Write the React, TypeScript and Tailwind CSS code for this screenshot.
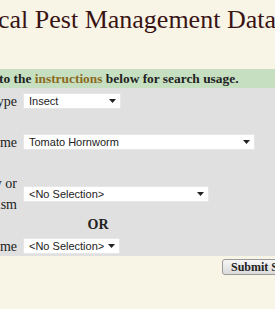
import React from 'react';

// Search form for the pest management database (viewport shows a cropped window)

const SERIF = "font-['Liberation_Serif','Times_New_Roman',serif]";
const SANS = "font-['Liberation_Sans',Arial,sans-serif]";

function Caret() {
  return (
    <svg width="7" height="4" viewBox="0 0 7 4" className="shrink-0">
      <polygon points="0,0 7,0 3.5,4" fill="#222" />
    </svg>
  );
}

function FakeSelect({ value, width }: { value: string; width: string }) {
  return (
    <div
      className={`flex h-[16px] items-center justify-between whitespace-nowrap bg-white border border-[#e6e6e6] pl-[5px] pr-[4px] text-[11px] leading-none text-[#222] ${SANS} ${width}`}
    >
      <span>{value}</span>
      <Caret />
    </div>
  );
}

function Label({ children }: { children: React.ReactNode }) {
  return <div className="flex justify-end overflow-hidden whitespace-nowrap">{children}</div>;
}

export default function App() {
  return (
    <div className="w-[275px] h-[315px] overflow-hidden bg-white">
      <div className="bg-[#f8f5e7] h-[309px] flex flex-col">
        {/* Title */}
        <div className="h-[69px] shrink-0 overflow-hidden">
          <h1
            className={`${SERIF} whitespace-nowrap text-[26px] leading-none text-[#3a1414] pt-[7px] -ml-[80px]`}
          >
            Biological Pest Management Database
          </h1>
        </div>

        {/* Notice bar */}
        <div
          className={`h-[19px] shrink-0 bg-[#c6dfc1] ${SERIF} text-[13.4px] font-bold text-[#222] whitespace-nowrap leading-[19px] -ml-[36px]`}
        >
          Refer to the <span className="text-[#8a6a1c]">instructions</span> below for search usage.
        </div>

        {/* Form panel */}
        <div className={`bg-[#e0e0e0] h-[168px] shrink-0 ${SERIF} text-[14px] text-[#222]`}>
          <div className="grid grid-cols-[17px_1fr] gap-x-[6px] items-center h-[20px] mt-[3px]">
            <Label>Type</Label>
            <FakeSelect value="Insect" width="w-[98px]" />
          </div>

          <div className="grid grid-cols-[17px_1fr] gap-x-[6px] items-center h-[20px] mt-[21px]">
            <Label>Name</Label>
            <FakeSelect value="Tomato Hornworm" width="w-[232px]" />
          </div>

          <div className="grid grid-cols-[17px_1fr] gap-x-[6px] items-center h-[44px] mt-[20px]">
            <div className="flex flex-col items-end overflow-hidden whitespace-nowrap leading-[21px]">
              <span>Family or</span>
              <span>Organism</span>
            </div>
            <FakeSelect value="<No Selection>" width="w-[186px]" />
          </div>

          <div className="w-[196px] h-[16px] text-center font-bold text-[14px] leading-[16px] mt-[1px]">OR</div>

          <div className="grid grid-cols-[17px_1fr] gap-x-[6px] items-center h-[20px] mt-[3px]">
            <Label>Name</Label>
            <FakeSelect value="<No Selection>" width="w-[97px]" />
          </div>
        </div>

        {/* Submit */}
        <div className="flex pl-[222px] pt-[3px] overflow-hidden">
          <button
            className={`${SERIF} shrink-0 whitespace-nowrap text-[12px] font-bold text-[#222] h-[16px] leading-none pl-[8px] pr-[8px] border border-[#9a9a9a] rounded-[3px] bg-gradient-to-b from-[#f7f7f7] to-[#dadada]`}
          >
            Submit Search
          </button>
        </div>
      </div>
    </div>
  );
}
